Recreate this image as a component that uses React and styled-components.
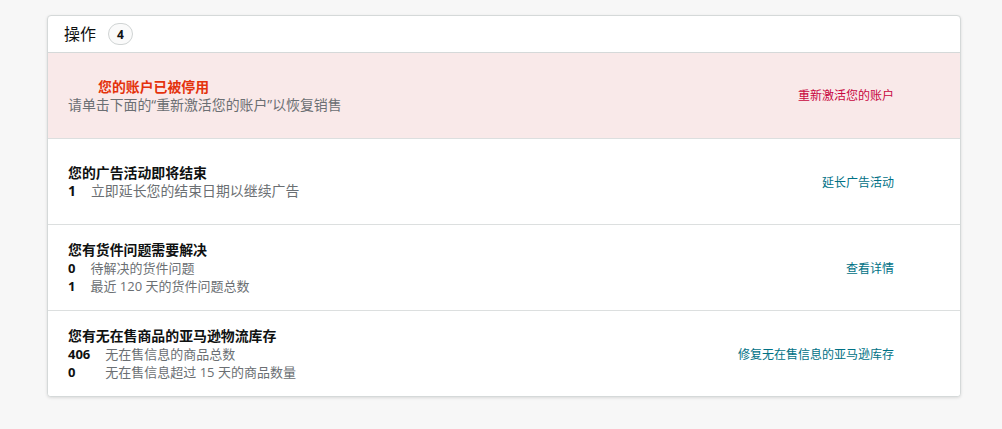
import React from 'react';
import styled, { createGlobalStyle } from 'styled-components';

const GlobalStyle = createGlobalStyle`
  html, body {
    margin: 0;
    padding: 0;
    background: #f7f7f7;
  }
  body {
    font-family: "Open Sans", "Noto Sans CJK SC", sans-serif;
    color: #0f1111;
  }
`;

const Page = styled.div`
  padding: 15px 41px 30px 47px;
`;

const Card = styled.section`
  background: #fff;
  border: 1px solid #d5d9d9;
  border-radius: 4px;
  box-shadow: 0 1px 3px rgba(15, 17, 17, 0.12);
  overflow: hidden;
`;

const Header = styled.header`
  display: flex;
  align-items: center;
  gap: 12px;
  height: 36px;
  padding-left: 16px;
  border-bottom: 1px solid #d5d9d9;
  box-shadow: 0 1px 1px rgba(0, 0, 0, 0.06);
`;

const HeaderTitle = styled.h2`
  margin: 0;
  font-size: 16px;
  font-weight: 400;
  line-height: 20px;
`;

const Badge = styled.span`
  display: inline-flex;
  align-items: center;
  justify-content: center;
  width: 23px;
  height: 20px;
  border: 1px solid #d0d4d4;
  border-radius: 12px;
  background: #fafafa;
  font-size: 12px;
  font-weight: 700;
`;

const Row = styled.div`
  display: flex;
  align-items: center;
  justify-content: space-between;
  height: 85px;
  padding: 0 66px 0 20px;
  background: ${p => (p.$alert ? '#f9e9e9' : '#fff')};
  border-top: 1px solid #dcdfdf;
  &:first-of-type {
    border-top: none;
  }
`;

const Info = styled.div`
  display: flex;
  flex-direction: column;
`;

const Title = styled.div`
  font-size: 13.9px;
  font-weight: 700;
  line-height: 18px;
  color: ${p => (p.$alert ? '#e4320c' : '#0f1111')};
  padding-left: ${p => (p.$alert ? '30px' : '0')};
`;

const Sub = styled.div`
  font-size: 13.9px;
  line-height: 18px;
  color: #6b6f73;
`;

const Stats = styled.div`
  display: grid;
  grid-template-columns: auto 1fr;
  column-gap: 15px;
  font-size: ${p => p.$size || '13px'};
  line-height: 18px;
`;

const Num = styled.span`
  font-weight: 700;
  color: #0f1111;
`;

const Label = styled.span`
  color: #6b6f73;
`;

const Action = styled.a`
  font-size: 12px;
  line-height: 16px;
  color: ${p => (p.$alert ? '#c8063f' : '#007185')};
  text-decoration: none;
  cursor: pointer;
  margin-top: ${p => p.$offset || '0'};
`;

const items = [
  {
    title: '您的广告活动即将结束',
    size: '13.9px',
    stats: [['1', '立即延长您的结束日期以继续广告']],
    action: '延长广告活动',
  },
  {
    title: '您有货件问题需要解决',
    stats: [
      ['0', '待解决的货件问题'],
      ['1', '最近 120 天的货件问题总数'],
    ],
    action: '查看详情',
  },
  {
    title: '您有无在售商品的亚马逊物流库存',
    stats: [
      ['406', '无在售信息的商品总数'],
      ['0', '无在售信息超过 15 天的商品数量'],
    ],
    action: '修复无在售信息的亚马逊库存',
  },
];

export default function App() {
  return (
    <Page>
      <GlobalStyle />
      <Card>
        <Header>
          <HeaderTitle>操作</HeaderTitle>
          <Badge>4</Badge>
        </Header>
        <Row $alert>
          <Info>
            <Title $alert>您的账户已被停用</Title>
            <Sub>请单击下面的“重新激活您的账户”以恢复销售</Sub>
          </Info>
          <Action $alert>重新激活您的账户</Action>
        </Row>
        {items.map((item, i) => (
          <Row key={i}>
            <Info>
              <Title>{item.title}</Title>
              <Stats $size={item.size}>
                {item.stats.map(([n, label], j) => (
                  <React.Fragment key={j}>
                    <Num>{n}</Num>
                    <Label>{label}</Label>
                  </React.Fragment>
                ))}
              </Stats>
            </Info>
            <Action $offset="2px">{item.action}</Action>
          </Row>
        ))}
      </Card>
    </Page>
  );
}
